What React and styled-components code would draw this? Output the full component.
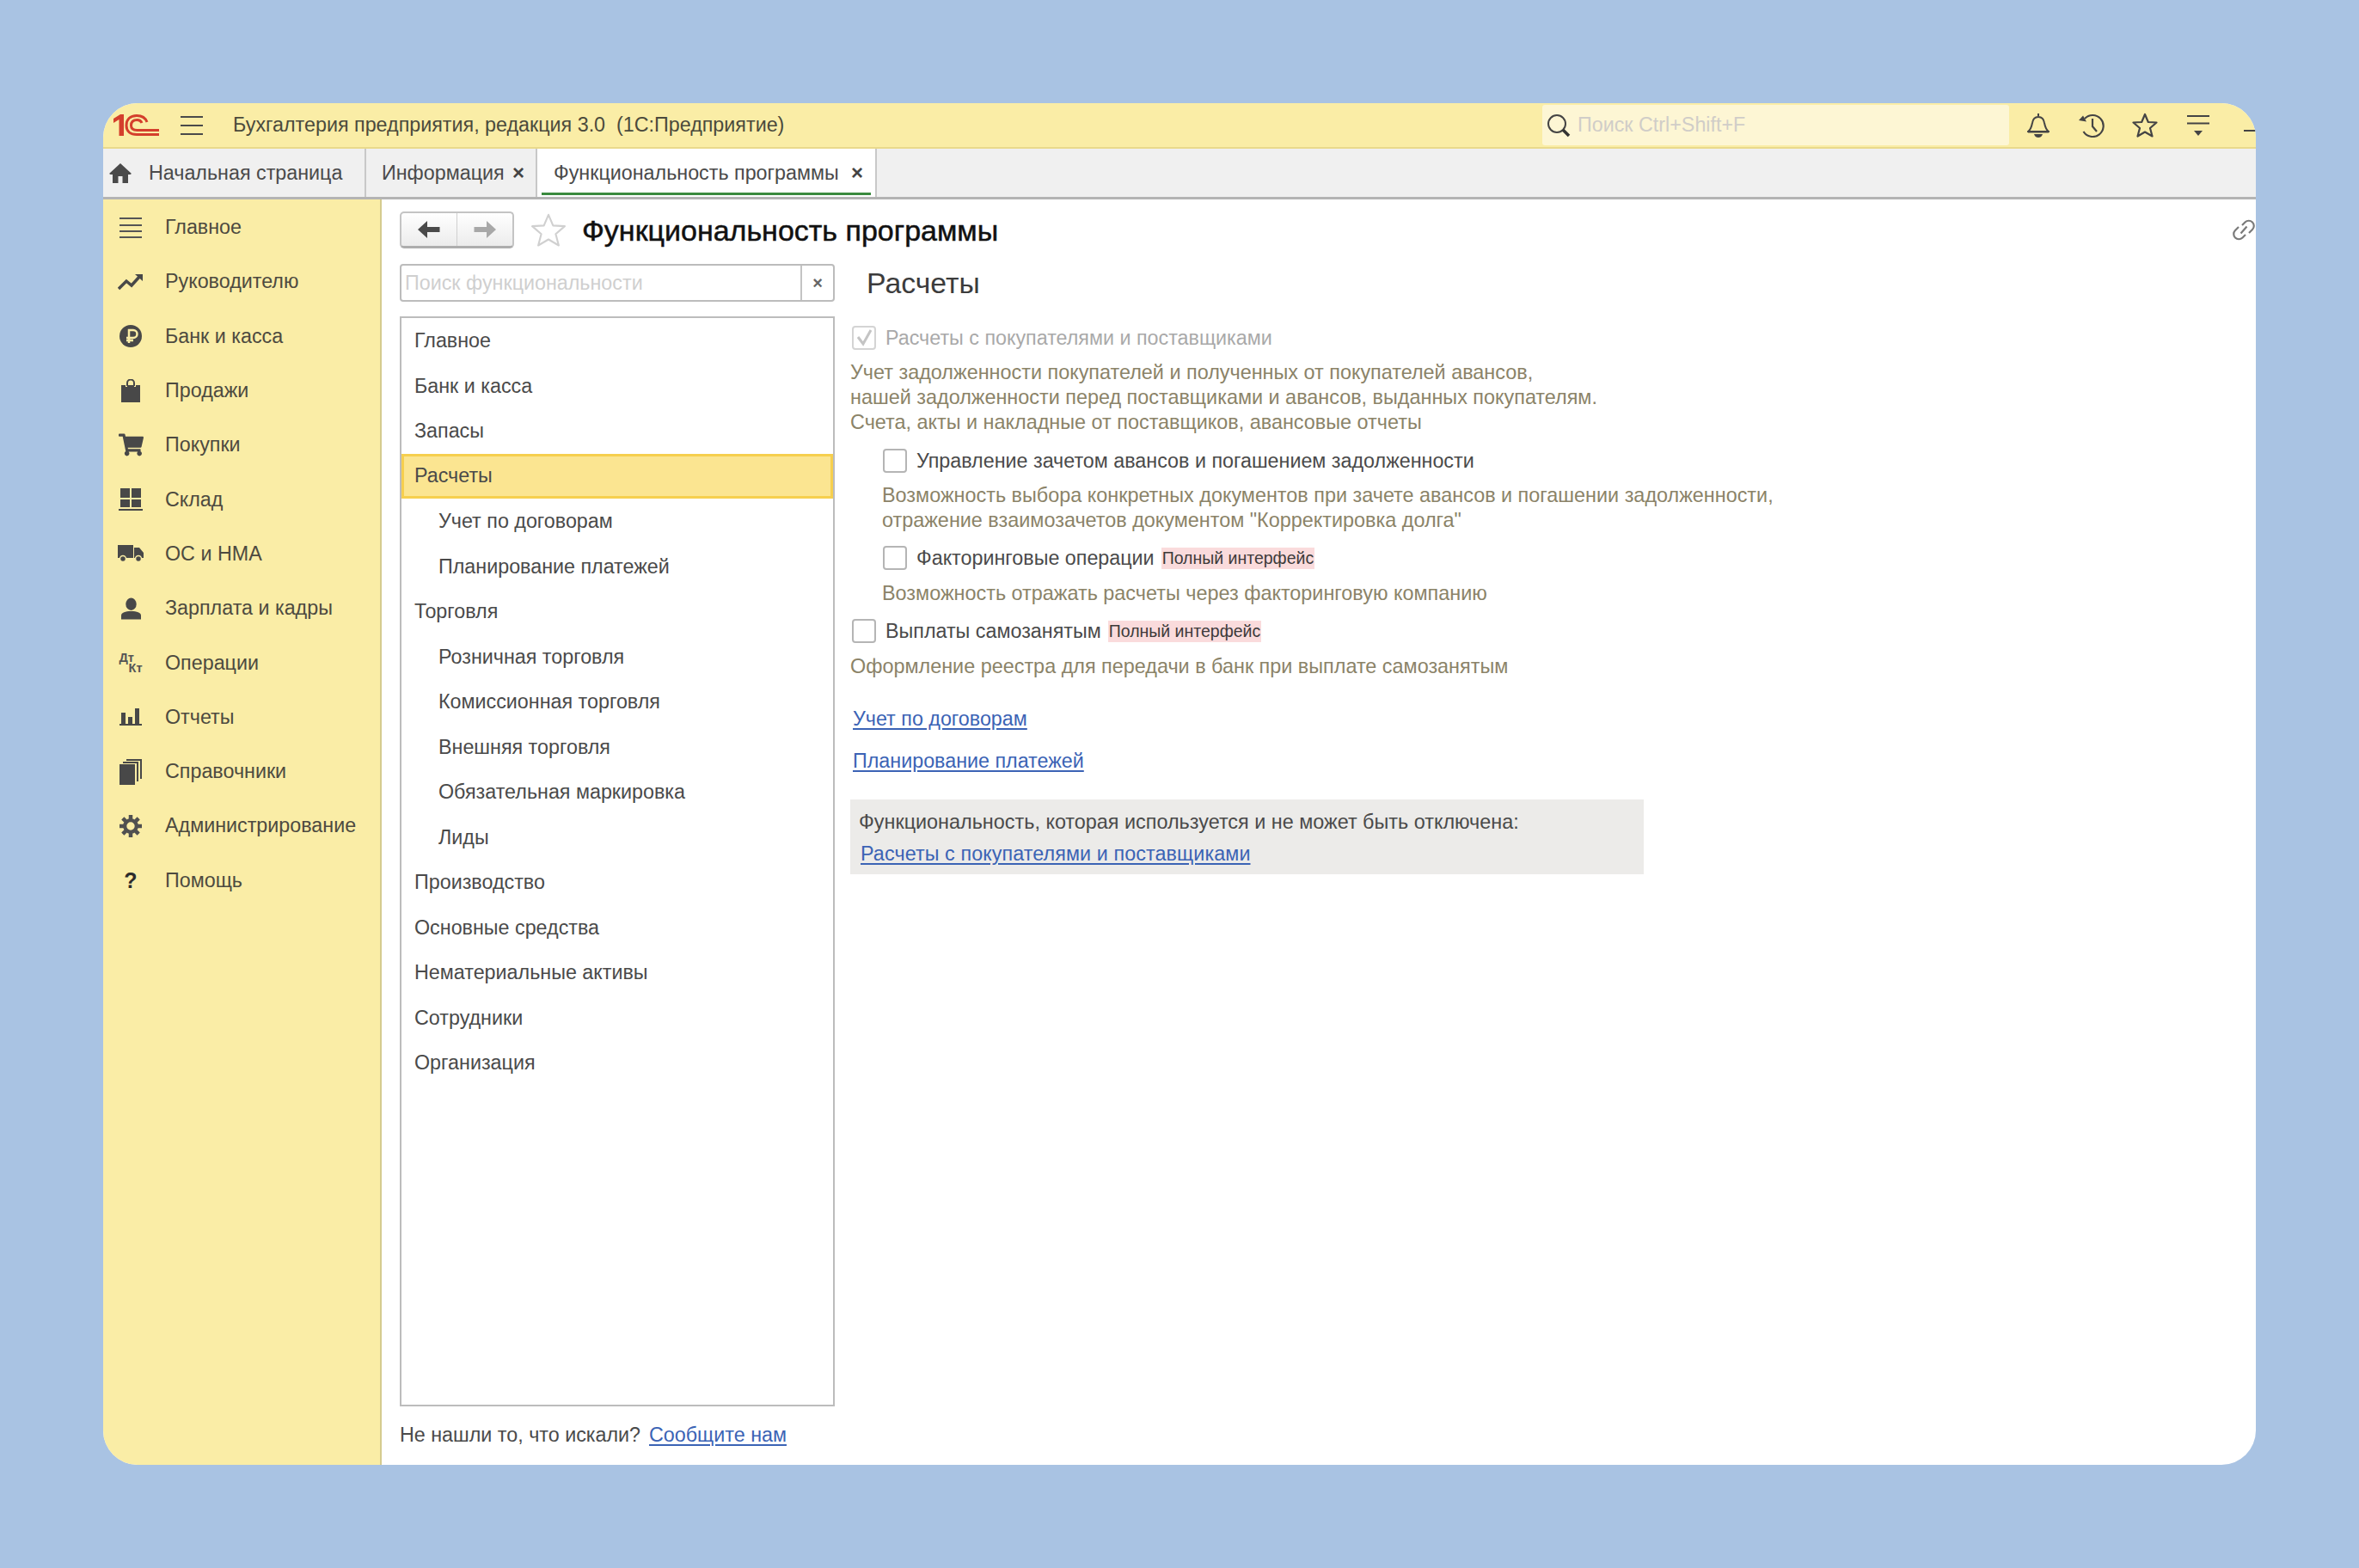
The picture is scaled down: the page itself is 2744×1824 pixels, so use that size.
import React from "react";
import styled, { createGlobalStyle } from "styled-components";
import { FaShoppingCart } from "react-icons/fa";

const Global = createGlobalStyle`
  html, body { margin: 0; padding: 0; background: #a9c3e3; }
  body { font-family: "Liberation Sans", Arial, sans-serif; color: #4a4a4a; }
  * { box-sizing: border-box; }
`;

const Page = styled.div`
  width: 2744px;
  height: 1824px;
  padding: 120px;
  background: #a9c3e3;
`;
const Win = styled.div`
  width: 2504px;
  height: 1584px;
  border-radius: 40px;
  overflow: hidden;
  background: #fff;
  display: flex;
  flex-direction: column;
`;
const TopBar = styled.header`
  height: 53px;
  flex: none;
  background: #faeda6;
  border-bottom: 2px solid #e9d98c;
  display: flex;
  align-items: center;
  padding-left: 12px;
  font-size: 23.3px;
  color: #4b4a3c;
`;
const Burger = styled.svg`
  width: 26px;
  height: 22px;
  margin-left: 24px;
  margin-right: 35px;
`;
const AppTitle = styled.div`
  flex: 1;
  white-space: pre;
`;
const GlobalSearch = styled.div`
  width: 543px;
  height: 47px;
  background: #fdf6d4;
  border-radius: 3px;
  display: flex;
  align-items: center;
  padding-left: 5px;
  gap: 8px;
  color: #d0cdc8;
  font-size: 23.3px;
`;
const TopIcons = styled.div`
  display: flex;
  align-items: center;
  width: 287px;
  flex: none;
  padding-left: 3px;
`;
const TopIcon = styled.span`
  width: 62px;
  flex: none;
  display: flex;
  justify-content: center;
`;
const Minimize = styled.span`
  width: 18px;
  height: 2px;
  background: #444;
  margin-top: 12px;
`;
const Tabs = styled.nav`
  height: 59px;
  flex: none;
  background: #f0f0f0;
  border-bottom: 3px solid #b4b4b4;
  display: flex;
  font-size: 23.3px;
`;
const Tab = styled.div`
  position: relative;
  width: ${p => p.$w}px;
  display: flex;
  align-items: center;
  padding-left: ${p => p.$pl}px;
  background: ${p => (p.$active ? "#fff" : "transparent")};
  border-right: 2px solid #c8c8c8;
  white-space: nowrap;
`;
const Underline = styled.span`
  position: absolute;
  left: 5px;
  right: 5px;
  bottom: 2px;
  height: 3px;
  background: #3a8a3e;
`;
const TabClose = styled.span`
  font-weight: bold;
  font-size: 24px;
  margin-left: auto;
  margin-right: ${p => p.$mr}px;
  color: #444;
`;
const HomeWrap = styled.span`
  display: flex;
  margin-right: 20px;
`;
const Body = styled.div`
  flex: 1;
  display: flex;
  min-height: 0;
`;
const Sidebar = styled.aside`
  width: 324px;
  flex: none;
  background: #faeda6;
  border-right: 2px solid #d5cb8f;
  padding: 1px 0 0 16px;
`;
const SideItem = styled.div`
  height: 63.3px;
  display: flex;
  align-items: center;
  font-size: 23.3px;
  color: #4d4a40;
  white-space: nowrap;
`;
const SideIcon = styled.span`
  width: 32px;
  margin-right: 24px;
  display: flex;
  justify-content: center;
  align-items: center;
  color: #484848;
`;
const DtKt = styled.span`
  display: flex;
  flex-direction: column;
  font-weight: bold;
  font-size: 14.5px;
  line-height: 12.5px;
  width: 27px;
  color: #555;
`;
const DtLine = styled.span`
  align-self: ${p => (p.$end ? "flex-end" : "flex-start")};
`;
const Question = styled.span`
  font-size: 25px;
  font-weight: bold;
  color: #2c2c2c;
`;
const Main = styled.main`
  flex: 1;
  min-width: 0;
  padding: 14px 0 0 21px;
  display: flex;
  flex-direction: column;
`;
const Header = styled.div`
  height: 43px;
  display: flex;
  align-items: center;
`;
const NavGroup = styled.div`
  width: 133px;
  height: 43px;
  display: flex;
  border: 2px solid #c4c4c4;
  border-bottom: 3px solid #adadad;
  border-radius: 5px;
  background: linear-gradient(#fff, #ececec);
`;
const NavBtn = styled.div`
  flex: 1;
  display: flex;
  align-items: center;
  justify-content: center;
  & + & { border-left: 1px solid #d0d0d0; }
`;
const FavStar = styled.span`
  margin-left: 19px;
  display: flex;
`;
const PageTitle = styled.h1`
  margin: 1px 0 0 18px;
  font-size: 34px;
  font-weight: normal;
  color: #111;
  -webkit-text-stroke: 0.5px #111;
  white-space: nowrap;
`;
const LinkIconWrap = styled.span`
  margin-left: auto;
  margin-right: 1px;
  display: flex;
`;
const Columns = styled.div`
  flex: 1;
  min-height: 0;
  margin-top: 18px;
  display: grid;
  grid-template-columns: 506px 1fr;
  column-gap: 18px;
`;
const Left = styled.div`
  display: flex;
  flex-direction: column;
`;
const SearchBox = styled.div`
  height: 44px;
  flex: none;
  display: flex;
  border: 2px solid #bcbcbc;
  border-radius: 4px;
`;
const SearchText = styled.div`
  flex: 1;
  display: flex;
  align-items: center;
  padding-left: 4px;
  padding-top: 1px;
  font-size: 23.3px;
  color: #cfcfcf;
`;
const SearchClear = styled.div`
  width: 38px;
  border-left: 2px solid #c4c4c4;
  display: flex;
  align-items: center;
  justify-content: center;
  font-size: 20px;
  font-weight: bold;
  color: #666;
`;
const List = styled.div`
  margin-top: 17px;
  height: 1268px;
  flex: none;
  border: 2px solid #bcbcbc;
`;
const ListRow = styled.div`
  height: 52.5px;
  display: flex;
  align-items: center;
  padding-left: ${p => (p.$sub ? 43 : 15)}px;
  padding-top: 1px;
  font-size: 23.3px;
  color: #4a4a4a;
  ${p => p.$active && "background:#fbe591;border:3px solid #f6cf4e;padding-left:12px;padding-top:0;"}
`;
const Footer = styled.div`
  flex: 1;
  display: flex;
  align-items: center;
  padding-bottom: 2px;
  gap: 10px;
  font-size: 23.3px;
`;
const Right = styled.div`
  display: flex;
  flex-direction: column;
`;
const SectionTitle = styled.h2`
  margin: 0;
  height: 44px;
  padding-left: 19px;
  display: flex;
  align-items: center;
  font-size: 33.8px;
  font-weight: normal;
  color: #3c3c3c;
`;
const CheckRow = styled.div`
  height: 28px;
  display: flex;
  align-items: center;
  margin-top: ${p => p.$mt}px;
  margin-left: ${p => (p.$indent ? 38 : 2)}px;
  font-size: 23.3px;
  color: ${p => (p.$muted ? "#a9a9a9" : "#4a4a4a")};
  white-space: nowrap;
`;
const Box = styled.span`
  width: 28px;
  height: 28px;
  flex: none;
  margin-right: 11px;
  border: 2px solid ${p => (p.$muted ? "#d4d4d4" : "#b5b5b5")};
  border-radius: 4px;
  display: flex;
  align-items: center;
  justify-content: center;
`;
const Badge = styled.span`
  margin-left: 8px;
  height: 25px;
  padding: 0 1px;
  display: flex;
  align-items: center;
  background: #fadbdc;
  font-size: 19.5px;
  color: #3d3a3a;
`;
const Desc = styled.div`
  margin-top: ${p => p.$mt}px;
  margin-left: ${p => (p.$indent ? 37 : 0)}px;
  font-size: 23.4px;
  line-height: 29px;
  color: #8b8368;
  white-space: nowrap;
`;
const A = styled.a`
  font-size: 23.3px;
  line-height: 29px;
  color: #3b63b5;
  text-decoration: underline;
  text-underline-offset: 3px;
  white-space: nowrap;
`;
const LinkRow = styled.div`
  margin-top: ${p => p.$mt}px;
  margin-left: 3px;
  height: 29px;
`;
const GreyBox = styled.div`
  margin-top: 30.5px;
  width: 923px;
  height: 87px;
  background: #ecebe9;
  padding: 12px 0 0 10px;
  font-size: 23.4px;
  line-height: 29px;
  color: #4a4a4a;
`;
const GreyLink = styled.div`
  margin-top: 8px;
  margin-left: 2px;
  line-height: 29px;
  letter-spacing: 0.1px;
`;

const Logo = () => (
  <svg width="54" height="26" viewBox="0 0 54 26" fill="none">
    <path d="M0 5 L8 0 H12 V25 H6.5 V6 L0 10Z" fill="#d43f2c" />
    <path d="M39 9 C37 3.5 32 1.5 27 1.5 C19.5 1.5 15 6 15 13 C15 20 20 23.5 27 23.5 H53" stroke="#d43f2c" strokeWidth="3" />
    <path d="M33 10 C32 7.5 30 6.5 27.5 6.5 C23 6.5 20.5 9 20.5 13 C20.5 16.5 23 18.5 27.5 18.5 H53" stroke="#d43f2c" strokeWidth="3" />
  </svg>
);
const Magnifier = () => (
  <svg width="28" height="28" viewBox="0 0 28 28" fill="none">
    <circle cx="12" cy="12" r="10" stroke="#444" strokeWidth="2" />
    <path d="M19 19 L26 26" stroke="#333" strokeWidth="3.5" />
  </svg>
);
const Home = () => (
  <svg width="26" height="23" viewBox="0 0 26 23" fill="#4a4a4a">
    <path d="M13 0 L26 12 L24.5 13 H22 V23 H15.5 V15 H10.5 V23 H4 V13 H1.5 L0 12Z" />
  </svg>
);
const Bell = () => (
  <svg width="26" height="28" viewBox="0 0 26 28" fill="none" stroke="#444" strokeWidth="2">
    <path d="M13 0v3M1 21c3-2 4-5 5-10 .6-4 3-7 7-7s6.4 3 7 7c1 5 2 8 5 10ZM1 21.5h24" />
    <path d="M8 24h10c-1 3-3 4-5 4s-4-1-5-4Z" fill="#444" stroke="none" />
  </svg>
);
const History = () => (
  <svg width="30" height="28" viewBox="0 0 30 28" fill="none" stroke="#444" strokeWidth="2.2">
    <path d="M7 6A12.5 12.5 0 1 1 5.5 21" />
    <path d="M0 8 L5 2.5 L9 9.5Z" fill="#444" stroke="none" />
    <path d="M16 6v9l5 6" />
  </svg>
);
const StarO = ({ size = 30, color = "#444", sw = 2.2 }) => (
  <svg width={size} height={size} viewBox="0 0 30 30" fill="none" stroke={color} strokeWidth={sw} strokeLinejoin="round">
    <path d="M15 2 L18.8 11 L28.5 11.5 L21 18 L23.5 27.5 L15 22.5 L6.5 27.5 L9 18 L1.5 11.5 L11.2 11 Z" />
  </svg>
);
const FilterMenu = () => (
  <svg width="26" height="26" viewBox="0 0 26 26" fill="none" stroke="#444" strokeWidth="2">
    <path d="M0 2h26M0 10.5h26" />
    <path d="M8 19h10l-5 6Z" fill="#444" stroke="none" />
  </svg>
);
const ArrowL = ({ color }) => (
  <svg width="26" height="20" viewBox="0 0 26 20" fill={color}>
    <path d="M0 10 L11 0 V7 H25.5 V13 H11 V20Z" />
  </svg>
);
const ArrowR = ({ color }) => (
  <svg width="26" height="20" viewBox="0 0 26 20" fill={color}>
    <path d="M26 10 L15 0 V7 H0.5 V13 H15 V20Z" />
  </svg>
);
const ChainIcon = () => (
  <svg width="26" height="27" viewBox="0 0 26 27" fill="none" stroke="#7a7a7a" strokeWidth="2.2">
    <path d="M11 8 L14.5 4.5 a6 6 0 0 1 8.5 8.5 L19 17" />
    <path d="M15 19 L11.5 22.5 a6 6 0 0 1-8.5-8.5 L7 10" />
    <path d="M9.5 17.5 L16.5 9.5" />
  </svg>
);
const Tick = () => (
  <svg width="24" height="24" viewBox="0 0 24 24" fill="none" stroke="#c4c4c4" strokeWidth="3">
    <path d="M5 11 L11 19 L20 3" />
  </svg>
);

const I = {
  lines: (
    <svg width="26" height="24" viewBox="0 0 26 24" stroke="#555" strokeWidth="2">
      <path d="M0 1h26M0 9h26M0 16h26M0 23h26" />
    </svg>
  ),
  trend: (
    <svg width="30" height="20" viewBox="0 0 30 20" fill="none" stroke="#484848" strokeWidth="3.5">
      <path d="M1 18 L10 9 L16 14 L26 3" />
      <path d="M20 1h9v8Z" fill="#484848" stroke="none" />
    </svg>
  ),
  bank: (
    <svg width="26" height="26" viewBox="0 0 26 26">
      <circle cx="13" cy="13" r="13" fill="#484848" />
      <path d="M11 21V6h5a4 4 0 0 1 0 9H8M8 18h8" fill="none" stroke="#faeda6" strokeWidth="2.5" />
    </svg>
  ),
  bag: (
    <svg width="22" height="27" viewBox="0 0 22 27">
      <path d="M0 7h5v2h2V7h8v2h2V7h5v20H0Z" fill="#484848" />
      <path d="M7 8V4.5a4 4 0 0 1 8 0V8" fill="none" stroke="#484848" strokeWidth="2" />
    </svg>
  ),
  cart: <FaShoppingCart size={29} color="#484848" />,
  store: (
    <svg width="28" height="26" viewBox="0 0 28 26" fill="#484848">
      <path d="M2 0h11v11H2ZM15 0h11v11H15ZM2 13h11v9H2ZM15 13h11v9H15ZM0 24h28v2H0Z" />
    </svg>
  ),
  truck: (
    <svg width="30" height="20" viewBox="0 0 30 20" fill="#484848">
      <path d="M0 0H18V15H0ZM19 3H25L30 9V15H19Z" />
      <circle cx="6" cy="16" r="3.5" stroke="#faeda6" strokeWidth="1.5" />
      <circle cx="24" cy="16" r="3.5" stroke="#faeda6" strokeWidth="1.5" />
    </svg>
  ),
  user: (
    <svg width="23" height="26" viewBox="0 0 24 26" fill="#484848">
      <ellipse cx="12" cy="7.5" rx="6.5" ry="7.5" />
      <path d="M0 26v-5c0-3 5-5 12-5s12 2 12 5v5Z" />
    </svg>
  ),
  ops: (
    <DtKt>
      <DtLine>Дт</DtLine>
      <DtLine $end>Кт</DtLine>
    </DtKt>
  ),
  chart: (
    <svg width="26" height="20" viewBox="0 0 26 20" fill="#484848">
      <path d="M2 5h5v13H2ZM10 10h5v8h-5ZM18 0h5v18h-5ZM0 18h26v2H0Z" />
    </svg>
  ),
  books: (
    <svg width="26" height="30" viewBox="0 0 26 30">
      <path d="M0 6h18v24H0Z" fill="#484848" />
      <path d="M4 4h17v22M8 1h17v22" fill="none" stroke="#484848" strokeWidth="2" />
    </svg>
  ),
  gear: (
    <svg width="26" height="26" viewBox="0 0 26 26" fill="none" stroke="#505050">
      <circle cx="13" cy="13" r="6.8" strokeWidth="4.2" />
      <path d="M13 0v5M13 21v5M0 13h5M21 13h5M3.8 3.8l3.5 3.5M18.7 18.700l3.5 3.5M22.200 3.8l-3.5 3.5M7.3 18.700l-3.5 3.5" strokeWidth="4.5" />
    </svg>
  ),
  help: <Question>?</Question>,
};

const side = [
  ["lines", "Главное"], ["trend", "Руководителю"], ["bank", "Банк и касса"], ["bag", "Продажи"],
  ["cart", "Покупки"], ["store", "Склад"], ["truck", "ОС и НМА"], ["user", "Зарплата и кадры"],
  ["ops", "Операции"], ["chart", "Отчеты"], ["books", "Справочники"], ["gear", "Администрирование"],
  ["help", "Помощь"],
];
const list = [
  ["Главное"], ["Банк и касса"], ["Запасы"], ["Расчеты", 0, 1], ["Учет по договорам", 1], ["Планирование платежей", 1],
  ["Торговля"], ["Розничная торговля", 1], ["Комиссионная торговля", 1], ["Внешняя торговля", 1],
  ["Обязательная маркировка", 1], ["Лиды", 1], ["Производство"], ["Основные средства"],
  ["Нематериальные активы"], ["Сотрудники"], ["Организация"],
];

export default function App() {
  return (
    <>
      <Global />
      <Page>
        <Win>
          <TopBar>
            <Logo />
            <Burger viewBox="0 0 26 22" stroke="#4a4a4a" strokeWidth="2">
              <path d="M0 1h26M0 11h26M0 21h26" />
            </Burger>
            <AppTitle>Бухгалтерия предприятия, редакция 3.0  (1С:Предприятие)</AppTitle>
            <GlobalSearch><Magnifier />Поиск Ctrl+Shift+F</GlobalSearch>
            <TopIcons>
              <TopIcon><Bell /></TopIcon>
              <TopIcon><History /></TopIcon>
              <TopIcon><StarO /></TopIcon>
              <TopIcon><FilterMenu /></TopIcon>
              <TopIcon><Minimize /></TopIcon>
            </TopIcons>
          </TopBar>
          <Tabs>
            <Tab $w={306} $pl={7}><HomeWrap><Home /></HomeWrap>Начальная страница</Tab>
            <Tab $w={199} $pl={18}>Информация<TabClose $mr={13}>×</TabClose></Tab>
            <Tab $w={395} $pl={19} $active>Функциональность программы<TabClose $mr={14}>×</TabClose><Underline /></Tab>
          </Tabs>
          <Body>
            <Sidebar>
              {side.map(([k, t]) => (
                <SideItem key={t}><SideIcon>{I[k]}</SideIcon>{t}</SideItem>
              ))}
            </Sidebar>
            <Main>
              <Header>
                <NavGroup>
                  <NavBtn><ArrowL color="#4a4a4a" /></NavBtn>
                  <NavBtn><ArrowR color="#a8a8a8" /></NavBtn>
                </NavGroup>
                <FavStar><StarO size={42} color="#d0d0d0" sw={1.5} /></FavStar>
                <PageTitle>Функциональность программы</PageTitle>
                <LinkIconWrap><ChainIcon /></LinkIconWrap>
              </Header>
              <Columns>
                <Left>
                  <SearchBox>
                    <SearchText>Поиск функциональности</SearchText>
                    <SearchClear>×</SearchClear>
                  </SearchBox>
                  <List>
                    {list.map(([t, sub, active]) => (
                      <ListRow key={t} $sub={sub} $active={active}>{t}</ListRow>
                    ))}
                  </List>
                  <Footer>Не нашли то, что искали? <A>Сообщите нам</A></Footer>
                </Left>
                <Right>
                  <SectionTitle>Расчеты</SectionTitle>
                  <CheckRow $mt={28} $muted><Box $muted><Tick /></Box>Расчеты с покупателями и поставщиками</CheckRow>
                  <Desc $mt={11.5}>
                    Учет задолженности покупателей и полученных от покупателей авансов,<br />
                    нашей задолженности перед поставщиками и авансов, выданных покупателям.<br />
                    Счета, акты и накладные от поставщиков, авансовые отчеты
                  </Desc>
                  <CheckRow $mt={16.5} $indent><Box />Управление зачетом авансов и погашением задолженности</CheckRow>
                  <Desc $mt={11.5} $indent>
                    Возможность выбора конкретных документов при зачете авансов и погашении задолженности,<br />
                    отражение взаимозачетов документом "Корректировка долга"
                  </Desc>
                  <CheckRow $mt={15.5} $indent><Box />Факторинговые операции<Badge>Полный интерфейс</Badge></CheckRow>
                  <Desc $mt={12.5} $indent>Возможность отражать расчеты через факторинговую компанию</Desc>
                  <CheckRow $mt={15.5}><Box />Выплаты самозанятым<Badge>Полный интерфейс</Badge></CheckRow>
                  <Desc $mt={12.5}>Оформление реестра для передачи в банк при выплате самозанятым</Desc>
                  <LinkRow $mt={32}><A>Учет по договорам</A></LinkRow>
                  <LinkRow $mt={20}><A>Планирование платежей</A></LinkRow>
                  <GreyBox>
                    Функциональность, которая используется и не может быть отключена:
                    <GreyLink><A>Расчеты с покупателями и поставщиками</A></GreyLink>
                  </GreyBox>
                </Right>
              </Columns>
            </Main>
          </Body>
        </Win>
      </Page>
    </>
  );
}
